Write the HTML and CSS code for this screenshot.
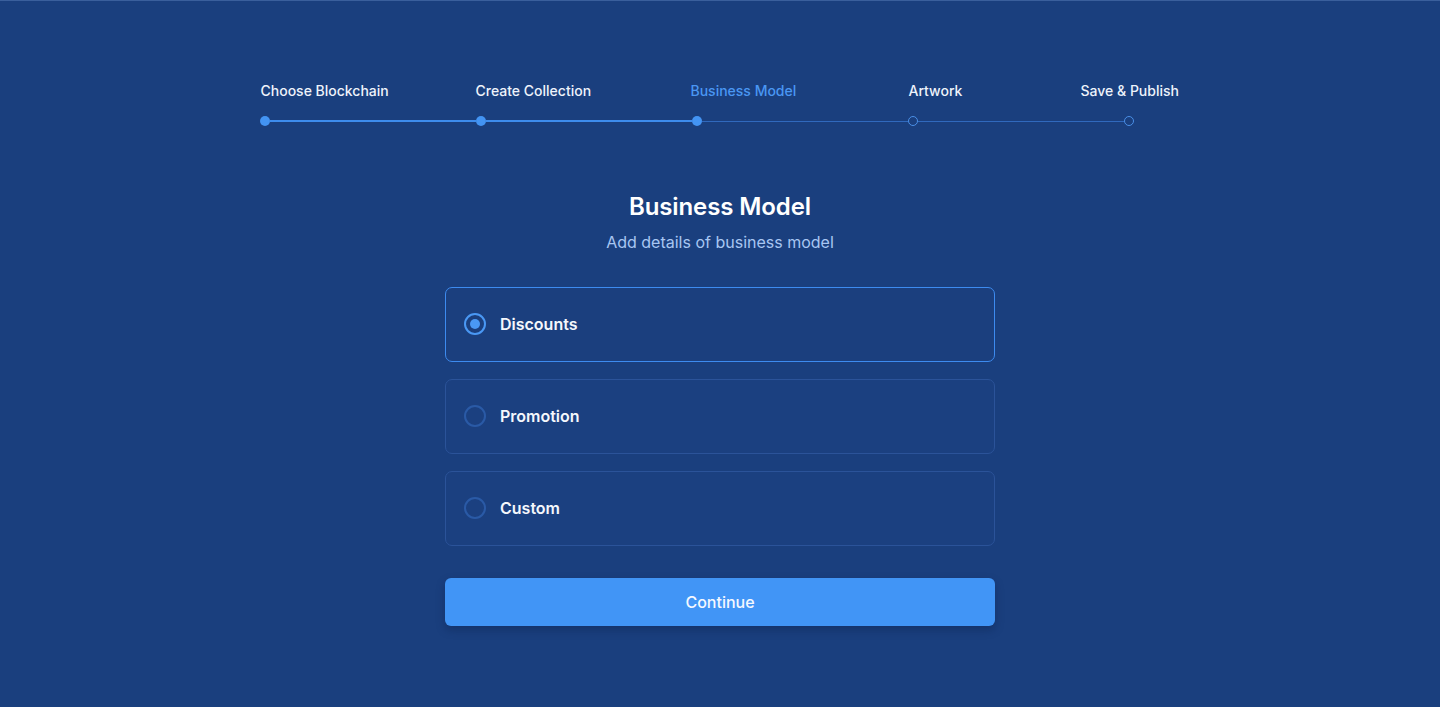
FILE: index.html
```html
<!DOCTYPE html>
<html lang="en">
<head>
<meta charset="utf-8">
<title>Business Model</title>
<link rel="stylesheet" href="styles.css">
</head>
<body>
<div class="page">
  <div class="stepper">
    <div class="labels">
      <span class="label done">Choose Blockchain</span>
      <span class="label done">Create Collection</span>
      <span class="label current">Business Model</span>
      <span class="label">Artwork</span>
      <span class="label last">Save &amp; Publish</span>
    </div>
    <div class="track">
      <span class="dot filled"></span><span class="seg active"></span>
      <span class="dot filled"></span><span class="seg active"></span>
      <span class="dot filled"></span><span class="seg"></span>
      <span class="dot hollow"></span><span class="seg"></span>
      <span class="dot hollow"></span>
    </div>
  </div>

  <h1 class="title">Business Model</h1>
  <p class="subtitle">Add details of business model</p>

  <div class="options">
    <label class="option selected">
      <span class="radio on"></span>
      <span class="option-text">Discounts</span>
    </label>
    <label class="option">
      <span class="radio"></span>
      <span class="option-text">Promotion</span>
    </label>
    <label class="option">
      <span class="radio"></span>
      <span class="option-text">Custom</span>
    </label>
  </div>

  <button class="continue">Continue</button>
</div>
</body>
</html>
```

FILE: styles.css
```css
* { box-sizing: border-box; }
html, body { margin: 0; padding: 0; }
body {
  background: #1a3f7e;
  font-family: Inter, "Noto Sans", "Liberation Sans", sans-serif;
  color: #ffffff;
  height: 707px;
  overflow: hidden;
  border-top: 1px solid #3a5f9c;
}
.page {
  display: flex;
  flex-direction: column;
  align-items: center;
  padding-top: 80px;
}
.stepper {
  width: 920px;
  margin-left: -1px;
}
.labels {
  display: flex;
  height: 20px;
  line-height: 20px;
  font-size: 14px;
  font-weight: 500;
}
.label {
  flex: 0 0 216px;
  white-space: nowrap;
  color: #eef3fb;
}
.label:first-child { padding-left: 1px; }
.label.current { color: #4a97f3; flex-basis: 218px; margin-left: -1px; }
.label.last { flex: 0 0 auto; margin-left: -44px; }
.track {
  display: flex;
  align-items: center;
  height: 10px;
  margin-top: 15px;
}
.dot {
  flex: 0 0 10px;
  width: 10px;
  height: 10px;
  border-radius: 50%;
}
.dot.filled { background: #4394f3; }
.dot.hollow { border: 1px solid #4a8fe6; background: transparent; }
.seg {
  flex: 0 0 206px;
  height: 1px;
  background: #3069bd;
}
.seg.active {
  height: 2px;
  background: #3d8ced;
}
.title {
  margin: 65px 0 0;
  font-size: 24px;
  line-height: 32px;
  font-weight: 600;
  letter-spacing: -0.1px;
}
.subtitle {
  margin: 7px 0 0;
  font-size: 16px;
  line-height: 24px;
  color: #a8c6f2;
}
.options {
  margin-top: 33px;
  width: 550px;
  display: flex;
  flex-direction: column;
  gap: 17px;
}
.option {
  height: 75px;
  border: 1px solid #2b5399;
  border-radius: 7px;
  background: #1b4080;
  display: flex;
  align-items: center;
  padding-left: 18px;
  gap: 14px;
  padding-bottom: 1px;
}
.option.selected { border-color: #3d8bef; background: #1b3f7e; }
.radio {
  width: 22px;
  height: 22px;
  border-radius: 50%;
  border: 2px solid #2a5aa6;
  display: flex;
  align-items: center;
  justify-content: center;
}
.radio.on { border-color: #4a98f4; }
.radio.on::after {
  content: "";
  width: 10px;
  height: 10px;
  border-radius: 50%;
  background: #4a98f4;
}
.option-text {
  font-size: 16px;
  font-weight: 600;
  color: #f4f7fc;
}
.continue {
  margin-top: 32px;
  width: 550px;
  height: 48px;
  border: 0;
  border-radius: 6px;
  background: #4195f6;
  color: #f4f8ff;
  font-family: inherit;
  font-size: 16px;
  font-weight: 500;
  box-shadow: 0 4px 8px rgba(10, 30, 70, 0.35);
}
```
